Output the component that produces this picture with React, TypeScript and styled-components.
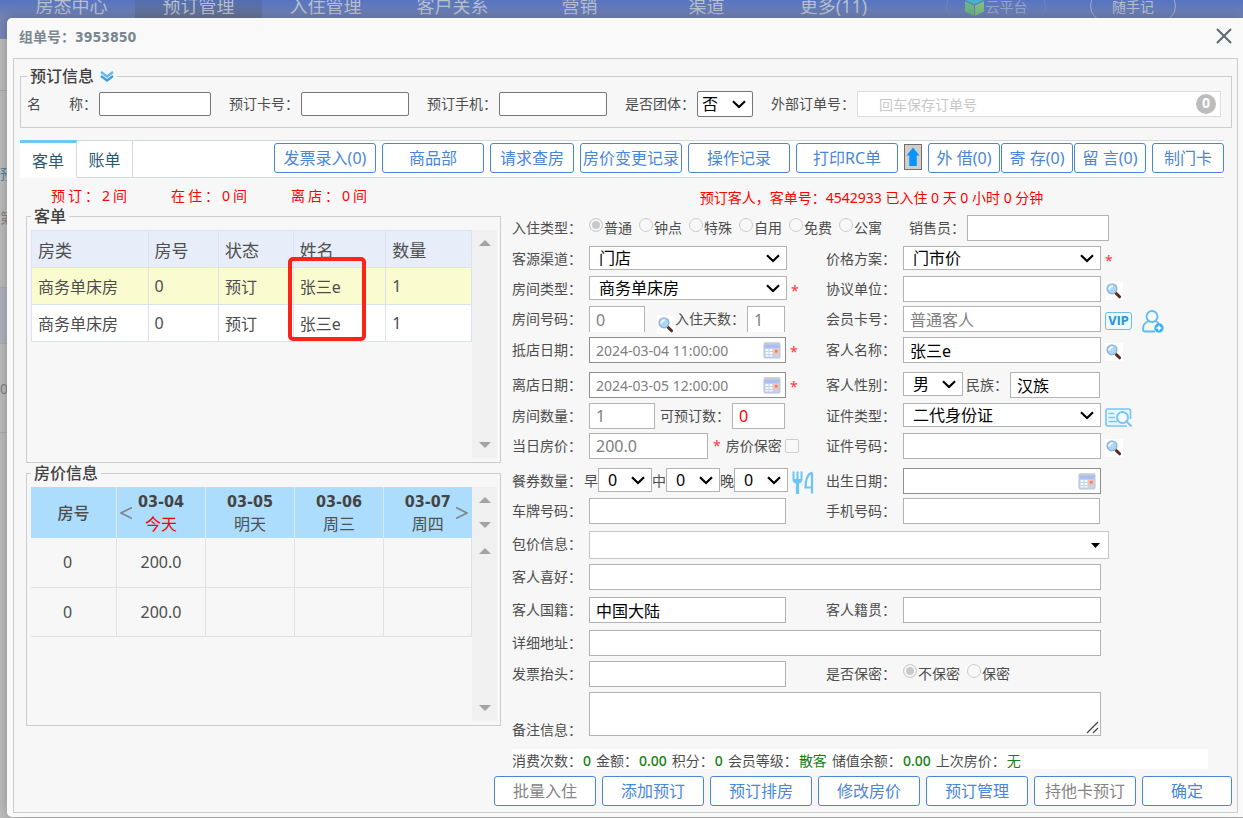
import React from 'react';
import styled, { createGlobalStyle, css } from 'styled-components';

const GlobalStyle = createGlobalStyle`
  * { box-sizing: border-box; }
  body { margin: 0; background: #bdbdbd; }
  body, button, input, select, textarea {
    font-family: "Noto Sans", "Noto Sans CJK SC", sans-serif;
  }
`;

const boldFont = '"DejaVu Sans Condensed", "Noto Sans CJK SC", sans-serif';

/* ---------- page behind the dialog ---------- */

const Page = styled.div`
  position: relative;
  min-height: 100vh;
  overflow: hidden;
  color: #4d4d4d;
  font-size: 14px;
`;

const Backdrop = styled.div`
  position: absolute;
  inset: 0;
  background: #bdbdbd;
`;

const TopBar = styled.div`
  display: flex;
  height: 39px;
  padding-left: 8px;
  background: linear-gradient(#5774c2, #7585b3 18px, #7888b8);
`;

const NavItem = styled.a<{ $active?: boolean }>`
  width: 127px;
  text-align: center;
  font-size: 18px;
  line-height: 12px;
  white-space: nowrap;
  color: #b9bfce;
  text-decoration: none;
  background: ${p => (p.$active ? 'linear-gradient(#526db0, #6b7694 18px)' : 'none')};
`;

const PillGroup = styled.div`
  display: flex;
  gap: 44px;
  margin-left: 49px;
`;

const Pill = styled.a<{ $faint?: boolean }>`
  display: flex;
  align-items: center;
  justify-content: center;
  gap: 2px;
  width: ${p => (p.$faint ? 100 : 86)}px;
  height: 32px;
  margin-top: -10px;
  border: 1px solid ${p => (p.$faint ? '#7286bd' : '#a3aecb')};
  border-radius: 16px;
  font-size: 14px;
  color: ${p => (p.$faint ? '#97a5cb' : '#b9bfce')};
  text-decoration: none;
  white-space: nowrap;
`;

const BackRow = styled.div<{ $h: number; $line?: boolean; $tint?: boolean; $blue?: boolean }>`
  display: flex;
  align-items: center;
  height: ${p => p.$h}px;
  border-bottom: ${p => (p.$line ? '1px solid #a9adb5' : '0')};
  background: ${p => (p.$tint ? '#afb4be' : 'none')};
  color: ${p => (p.$blue ? '#4d86a5' : '#848484')};
`;

/* ---------- dialog ---------- */

const Dialog = styled.div`
  position: relative;
  margin: 18px 0 0 7px;
  padding: 0 5px 4px 6px;
  border-radius: 5px 0 0 5px;
  background: #f9f9f9;
  box-shadow: 0 0 14px rgba(0, 0, 0, 0.25);
`;

const TitleBar = styled.header`
  display: flex;
  justify-content: space-between;
  align-items: center;
  height: 40px;
  padding: 0 6px 4px 6px;
`;

const Title = styled.h1`
  margin: 0;
  font-family: ${boldFont};
  font-size: 14px;
  font-weight: bold;
  color: #7a8791;
`;

const IconButton = styled.button`
  display: inline-flex;
  align-items: center;
  justify-content: center;
  flex: none;
  padding: 0;
  border: 0;
  background: none;
`;

const Frame = styled.main`
  padding: 6px 5px 6px 6px;
  border: 1px solid #ccc;
  background: #f7f7f7;
`;

const Legend = styled.legend`
  display: flex;
  align-items: center;
  gap: 6px;
  padding: 0 3px;
  font-size: 16px;
  line-height: 20px;
  font-weight: 500;
  color: #404040;
`;

const Group = styled.fieldset`
  min-width: 0;
  margin: 0;
  padding: 4px 3px 4px 4px;
  border: 1px solid #ccc;
`;

const OrderGroup = styled(Group)`
  padding: 4px 10px 10px 6px;
  ${Legend} { line-height: 22px; }
`;

const SearchRow = styled.div`
  display: flex;
  align-items: center;
  gap: 18px;
`;

const SearchField = styled.div<{ $grow?: boolean }>`
  display: flex;
  align-items: center;
  flex: ${p => (p.$grow ? '1' : 'none')};
`;

const Label = styled.label`
  flex: none;
  padding-right: 2px;
  line-height: 26px;
  white-space: nowrap;
`;

const SearchInput = styled.input<{ $w: number }>`
  width: ${p => p.$w}px;
  height: 24px;
  padding: 0 6px;
  border: 1px solid #767676;
  border-radius: 2px;
  background: #fff;
  font-size: 14px;
`;

const OuterBox = styled.div`
  display: flex;
  align-items: center;
  flex: 1;
  height: 26px;
  padding: 0 4px 0 21px;
  border: 1px solid #ddd;
  background: #fff;
`;

const OuterInput = styled.input`
  flex: 1;
  min-width: 0;
  padding: 0;
  border: 0;
  outline: 0;
  background: none;
  font-size: 14px;
  &::placeholder { color: #c8c8c8; }
`;

const CountBadge = styled.span`
  width: 20px;
  height: 20px;
  border-radius: 10px;
  background: #bdbdbd;
  color: #fff;
  text-align: center;
  font-size: 14px;
  line-height: 18px;
  font-weight: bold;
`;

/* ---------- toolbar ---------- */

const Toolbar = styled.div`
  display: flex;
  justify-content: space-between;
  height: 38px;
  margin: 12px 8px 0 0;
  border-top: 1px solid #d3dadd;
  border-bottom: 1px solid #d3dadd;
  background: #fff;
`;

const Tabs = styled.div`
  display: flex;
  margin: -1px 0;
`;

const Tab = styled.button<{ $active?: boolean }>`
  width: ${p => (p.$active ? 57 : 56)}px;
  padding: 0;
  border: 0;
  border-right: 1px solid #d3dadd;
  border-top: ${p => (p.$active ? '3px solid #6cc9f4' : '1px solid #d3dadd')};
  border-bottom: 1px solid ${p => (p.$active ? '#fff' : '#d3dadd')};
  background: #fff;
  font-size: 16px;
  color: #255a72;
`;

const Actions = styled.div`
  display: flex;
  gap: 6px;
  padding-top: 2px;
`;

const TightActions = styled.div`
  display: flex;
  gap: 1px;
`;

const ActionButton = styled.button<{ $w?: number; $muted?: boolean }>`
  flex: none;
  width: ${p => p.$w ?? 102}px;
  height: 30px;
  padding: 0;
  border: 1px solid #4a86d8;
  border-radius: 3px;
  background: #fff;
  font-size: 16px;
  line-height: 24px;
  white-space: nowrap;
  color: ${p => (p.$muted ? '#858585' : '#4a86d8')};
`;

const ArrowButton = styled(IconButton)`
  width: 18px;
  height: 26px;
  margin-top: 1px;
  border: 1px solid #6e6e6e;
  background: #d2cfc8;
`;

/* ---------- body columns ---------- */

const Columns = styled.div`
  display: grid;
  grid-template-columns: minmax(0, 475fr) minmax(0, 719fr);
  gap: 11px;
  padding: 0 1px 0 6px;
`;

const Counts = styled.div`
  display: flex;
  height: 28px;
  padding: 8px 0 0 25px;
  line-height: 20px;
  letter-spacing: 3px;
  color: #f00;
`;

const Count = styled.span`
  width: 120px;
`;

const ListArea = styled.div<{ $h: number }>`
  position: relative;
  display: flex;
  align-items: flex-start;
  min-height: ${p => p.$h}px;
`;

const Track = styled.div`
  align-self: stretch;
  display: flex;
  flex-direction: column;
  flex: none;
  width: 25px;
  background: #f0f0f0;
`;

const TrackPart = styled.div<{ $h?: number }>`
  display: flex;
  flex-direction: column;
  justify-content: space-between;
  align-items: center;
  flex: ${p => (p.$h ? 'none' : '1')};
  height: ${p => (p.$h ? `${p.$h}px` : 'auto')};
  padding: 10px 0;
`;

const Triangle = styled.i<{ $down?: boolean }>`
  border: 6px solid transparent;
  border-top: ${p => (p.$down ? '6px solid #a3a3a3' : '0')};
  border-bottom: ${p => (p.$down ? '0' : '6px solid #a3a3a3')};
`;

const GuestTable = styled.table`
  flex: 1;
  table-layout: fixed;
  border-collapse: collapse;
  font-size: 16px;
  th, td {
    height: 37px;
    padding: 0 0 0 6px;
    border: 1px solid #dce3f0;
    text-align: left;
    font-weight: normal;
    white-space: nowrap;
  }
  th { font-size: 17px; background: #e7edf9; }
`;

const GuestRow = styled.tr<{ $selected?: boolean }>`
  background: ${p => (p.$selected ? '#fafcd0' : '#fff')};
`;

const Marker = styled.div`
  position: absolute;
  left: 257px;
  top: 27px;
  width: 78px;
  height: 84px;
  border: 4px solid #fc2317;
  border-radius: 5px;
`;

const PriceTable = styled.table`
  flex: 1;
  table-layout: fixed;
  border-collapse: collapse;
  font-size: 16px;
  th {
    position: relative;
    height: 51px;
    padding: 0;
    border-right: 1px solid #dfe9f0;
    background: #acddfd;
    line-height: 22px;
    font-weight: normal;
  }
  th:last-child { border-right: 0; }
  td {
    height: 49px;
    padding: 0;
    border-right: 1px solid #e2e2e2;
    border-bottom: 1px solid #e2e2e2;
    text-align: center;
  }
  td:first-child { padding-right: 12px; }
`;

const DateText = styled.div`
  font-family: ${boldFont};
  font-weight: bold;
  color: #444;
`;

const DayText = styled.div<{ $today?: boolean }>`
  color: ${p => (p.$today ? '#f00' : '#505050')};
`;

const RoomHead = styled.span`
  font-weight: 500;
`;

const Pager = styled(IconButton)<{ $side: 'left' | 'right' }>`
  position: absolute;
  top: 19px;
  ${p => (p.$side === 'left' ? 'left: 3px;' : 'right: 4px;')}
`;

/* ---------- guest form ---------- */

const Form = styled.form`
  min-width: 0;
`;

const Notice = styled.p`
  height: 37px;
  margin: 0;
  padding-top: 8px;
  line-height: 24px;
  text-align: center;
  color: #f00;
`;

const Row = styled.div<{ $h: number; $end?: boolean }>`
  display: flex;
  align-items: ${p => (p.$end ? 'flex-end' : 'flex-start')};
  height: ${p => p.$h}px;
`;

const Half = styled.div<{ $part: 'left' | 'right' }>`
  display: flex;
  align-items: inherit;
  min-width: 0;
  flex: ${p => (p.$part === 'left' ? '314 1 0' : '405 1 0')};
`;

const FormLabel = styled(Label)<{ $w?: number; $low?: boolean }>`
  width: ${p => p.$w ?? 77}px;
  padding: 0;
  line-height: ${p => (p.$low ? 12 : 26)}px;
`;

const Cell = styled.div`
  display: flex;
  align-items: inherit;
  flex: 1;
  min-width: 0;
`;

const Slot = styled.div<{ $w: number }>`
  display: flex;
  align-items: center;
  flex: none;
  gap: 10px;
  width: ${p => p.$w}px;
  height: 30px;
  padding-left: 4px;
`;

const control = css`
  border: 1px solid #b3b3b3;
  border-radius: 0;
  background: #fff;
  font-size: 16px;
`;

const Text = styled.input<{ $w?: number; $tone?: string; $cut?: boolean }>`
  ${control}
  flex: ${p => (p.$w ? 'none' : '1')};
  width: ${p => (p.$w ? `${p.$w}px` : 'auto')};
  min-width: 0;
  height: 26px;
  padding: 0 6px;
  border-bottom-width: ${p => (p.$cut ? 0 : 1)}px;
  color: ${p => p.$tone ?? '#000'};
`;

const SelectBox = styled.div<{ $w?: number }>`
  position: relative;
  display: flex;
  flex: ${p => (p.$w ? 'none' : '1')};
  width: ${p => (p.$w ? `${p.$w}px` : 'auto')};
  min-width: 0;
  svg {
    position: absolute;
    right: 7px;
    top: 50%;
    margin-top: -4px;
    pointer-events: none;
  }
`;

const SelectInput = styled.select<{ $dark?: boolean }>`
  ${control}
  appearance: none;
  flex: 1;
  min-width: 0;
  height: ${p => (p.$dark ? 26 : 24)}px;
  padding: ${p => (p.$dark ? '0 4px' : '0 9px')};
  border-color: ${p => (p.$dark ? '#767676' : '#b3b3b3')};
  border-radius: ${p => (p.$dark ? 2 : 0)}px;
  color: #000;
`;

const DateBox = styled.div`
  display: flex;
  align-items: center;
  flex: 1;
  min-width: 0;
  height: 26px;
  padding: 0 4px 0 6px;
  border: 1px solid #8f8f8f;
  background: #fff;
`;

const DateInput = styled.input`
  flex: 1;
  min-width: 0;
  padding: 0;
  border: 0;
  outline: 0;
  background: none;
  font-size: 14px;
  color: #808080;
`;

const ComboBox = styled.div`
  display: flex;
  align-items: center;
  flex: 1;
  height: 28px;
  padding: 0 8px 0 6px;
  border: 1px solid #c6c6c6;
  background: #fff;
`;

const AreaBox = styled.div`
  position: relative;
  display: flex;
  flex: 1;
  svg {
    position: absolute;
    right: 2px;
    bottom: 2px;
    pointer-events: none;
  }
`;

const Area = styled.textarea`
  ${control}
  flex: 1;
  height: 44px;
  padding: 2px 6px;
  resize: none;
`;

const Star = styled.span<{ $spaced?: boolean }>`
  padding: ${p => (p.$spaced ? '0 5px' : '0')};
  font-size: 14px;
  line-height: 26px;
  color: #f33;
`;

const LensInline = styled.span`
  display: flex;
  align-items: flex-end;
  flex: none;
  height: 28px;
  margin-left: auto;
`;

const InlineLabel = styled(Label)<{ $push?: boolean }>`
  margin-left: ${p => (p.$push ? 'auto' : '0')};
`;

const Meal = styled.label`
  flex: none;
  width: 14px;
  line-height: 26px;
`;

const RadioGroup = styled.div`
  display: flex;
  flex: 1;
  gap: 7px;
`;

const RadioLabel = styled.label`
  display: flex;
  gap: 1px;
  line-height: 26px;
  white-space: nowrap;
`;

const Radio = styled.input.attrs({ type: 'radio' })`
  appearance: none;
  width: 14px;
  height: 14px;
  margin: 3px 0 0;
  border: 1px solid #cdcdcd;
  border-radius: 50%;
  background: #f8f8f8;
  &:checked {
    background: #c9c9c9;
    box-shadow: inset 0 0 0 2px #f8f8f8;
  }
`;

const Check = styled.input.attrs({ type: 'checkbox' })`
  appearance: none;
  flex: none;
  width: 14px;
  height: 14px;
  margin: 6px 0 0 1px;
  border: 1px solid #cdcdcd;
  border-radius: 2px;
  background: #f8f8f8;
`;

const LensTile = styled(IconButton)`
  width: 18px;
  height: 18px;
  background: #fff;
`;

const VipBadge = styled.button`
  width: 27px;
  height: 18px;
  padding: 0;
  border: 1px solid #6fbdf0;
  border-radius: 3px;
  background: #eef8ff;
  font-family: ${boldFont};
  font-size: 12px;
  font-weight: bold;
  line-height: 14px;
  color: #2d97de;
`;

const Stats = styled.div`
  display: flex;
  gap: 5px;
  height: 20px;
  margin: 13px 23px 0 0;
  background: #fff;
  line-height: 24px;
  white-space: nowrap;
`;

const Stat = styled.span`
  display: flex;
  gap: 1px;
`;

const Value = styled.span<{ $number: boolean }>`
  font-weight: ${p => (p.$number ? 500 : 400)};
  color: #138413;
`;

const Footer = styled.footer`
  display: flex;
  justify-content: flex-end;
  gap: 6px;
  margin-top: 7px;
`;

/* ---------- icons ---------- */

const Lens = ({ name }: { name: string }) => (
  <LensTile type="button" aria-label={name}>
    <svg width="18" height="18" viewBox="0 0 18 18">
      <path d="M11 11.2 L14.6 14.8" stroke="#5b2a18" strokeWidth="3" strokeLinecap="round" />
      <circle cx="7" cy="6.8" r="4.9" fill="#a9d6f8" stroke="#93b4d6" strokeWidth="1.4" />
      <path d="M4.2 7.6 Q4.4 4.4 7.8 4.2" stroke="#f2faff" strokeWidth="1.8" fill="none" />
    </svg>
  </LensTile>
);

const Calendar = ({ name }: { name: string }) => (
  <IconButton type="button" aria-label={name}>
    <svg width="18" height="17" viewBox="0 0 18 17">
      <rect x="1" y="1" width="16" height="15" rx="1" fill="#c3d2ee" stroke="#b9c4da" />
      <rect x="1" y="0.5" width="16" height="2" fill="#cfcac6" />
      <rect x="1.5" y="2.5" width="15" height="3.5" fill="#a8bff3" />
      <path d="M2.5 7h3v2h-3zM6.5 7h3v2h-3zM2.5 10h3v2h-3zM6.5 10h3v2h-3zM2.5 13h3v1.5h-3zM6.5 13h3v1.5h-3z" fill="#f5f8fe" />
      <rect x="10" y="6.5" width="5.5" height="6" fill="#f5bfae" />
      <rect x="12" y="8" width="2.5" height="2.5" fill="#ea7c62" />
    </svg>
  </IconButton>
);

const DoubleChevron = () => (
  <svg width="14" height="12" viewBox="0 0 14 12" fill="none" strokeWidth="2.2">
    <path d="M1 2 L7 6.5 L13 2" stroke="#63b9ef" />
    <path d="M1 6 L7 10.5 L13 6" stroke="#3c9fe6" />
  </svg>
);

const Cutlery = () => (
  <svg width="22" height="24" viewBox="0 0 22 24" fill="none" stroke="#6cc5f7">
    <path d="M1.5 0.5V8Q1.5 11.5 5.5 11.5Q9.5 11.5 9.5 8V0.5M5.5 0.5V11" strokeWidth="2" />
    <path d="M2 8H9V10L5.5 12L2 10Z" fill="#6cc5f7" stroke="none" />
    <path d="M5.5 11V23" strokeWidth="3.2" />
    <path d="M20 1.5V22.5M20 1.5Q13.5 4 13.5 16.5H19" strokeWidth="2.2" />
  </svg>
);

const PersonAdd = () => (
  <svg width="22" height="23" viewBox="0 0 22 23" fill="none">
    <circle cx="10" cy="6.5" r="5.5" stroke="#5bbcf5" strokeWidth="1.8" />
    <path d="M6.5 11Q1 13 1 19.5Q1 21.5 3 21.5H13M13.5 11Q16 12 17 14" stroke="#5bbcf5" strokeWidth="1.8" />
    <circle cx="17" cy="18" r="4.7" fill="#3fb0f3" />
    <path d="M14.5 18H19.5M17 15.5V20.5" stroke="#fff" strokeWidth="1.4" />
  </svg>
);

const CardSearch = () => (
  <svg width="27" height="20" viewBox="0 0 27 20" fill="none" stroke="#79c5f4">
    <path d="M25.5 11V3Q25.5 1 23.5 1H3Q1 1 1 3V16Q1 18 3 18H22" strokeWidth="1.6" fill="#e9f6fe" />
    <path d="M3.5 5.5H9M3.5 9.5H10M3.5 13.5H12" strokeWidth="1.6" />
    <circle cx="17.5" cy="9.5" r="5.5" strokeWidth="2" fill="#f4fbff" />
    <path d="M21.5 13.5L26.5 18.5" strokeWidth="2" />
  </svg>
);

const Cube = () => (
  <svg width="19" height="20" viewBox="0 0 19 20">
    <path d="M9.5 0L19 4L9.5 8.5L0 4Z" fill="#4cb0cc" />
    <path d="M0 5L9 9.5V20L0 15.5Z" fill="#6cb584" />
    <path d="M19 5L10 9.5V20L19 15.5Z" fill="#7cbd80" />
  </svg>
);

/* ---------- data ---------- */

const nav = ['房态中心', '预订管理', '入住管理', '客户关系', '营销', '渠道', '更多(11)'];
const guests = [
  ['商务单床房', '0', '预订', '张三e', '1'],
  ['商务单床房', '0', '预订', '张三e', '1'],
];
const days = [
  ['03-04', '今天'],
  ['03-05', '明天'],
  ['03-06', '周三'],
  ['03-07', '周四'],
];
const stayTypes = ['普通', '钟点', '特殊', '自用', '免费', '公寓'];
const stats = [
  ['消费次数：', '0'],
  ['金额：', '0.00'],
  ['积分：', '0'],
  ['会员等级：', '散客'],
  ['储值余额：', '0.00'],
  ['上次房价：', '无'],
];

const Select = ({ id, value, width, dark }: { id: string; value: string; width?: number; dark?: boolean }) => (
  <SelectBox $w={width}>
    <SelectInput id={id} $dark={dark}><option>{value}</option></SelectInput>
    <svg width="14" height="9" viewBox="0 0 14 9" fill="none" stroke="#000" strokeWidth="2.2">
      <path d="M1 1.2L7 7L13 1.2" />
    </svg>
  </SelectBox>
);

const MealSelect = ({ id, label }: { id: string; label: string }) => (
  <>
    <Meal htmlFor={id}>{label}</Meal>
    <Select id={id} value="0" width={54} />
  </>
);

export default function App() {
  return (
    <Page>
      <GlobalStyle />
      <Backdrop>
        <TopBar>
          {nav.map((n, i) => <NavItem href="#" key={n} $active={i === 1}>{n}</NavItem>)}
          <PillGroup>
            <Pill href="#" $faint><Cube />云平台</Pill>
            <Pill href="#">随手记</Pill>
          </PillGroup>
        </TopBar>
        <BackRow $h={52} $line />
        <BackRow $h={60} />
        <BackRow $h={44} $blue>预</BackRow>
        <BackRow $h={44}>第</BackRow>
        <BackRow $h={49} $line />
        <BackRow $h={56} $tint $line />
        <BackRow $h={89} $line>00</BackRow>
      </Backdrop>

      <Dialog role="dialog" aria-labelledby="dialog-title">
        <TitleBar>
          <Title id="dialog-title">组单号：3953850</Title>
          <IconButton type="button" aria-label="关闭">
            <svg width="16" height="16" viewBox="0 0 16 16" stroke="#5d6770" strokeWidth="2">
              <path d="M1 1L15 15M15 1L1 15" />
            </svg>
          </IconButton>
        </TitleBar>

        <Frame>
          <OrderGroup>
            <Legend>预订信息<DoubleChevron /></Legend>
            <SearchRow>
              <SearchField>
                <Label htmlFor="name">名　　称：</Label>
                <SearchInput id="name" $w={112} />
              </SearchField>
              <SearchField>
                <Label htmlFor="card">预订卡号：</Label>
                <SearchInput id="card" $w={108} />
              </SearchField>
              <SearchField>
                <Label htmlFor="mobile">预订手机：</Label>
                <SearchInput id="mobile" $w={108} />
              </SearchField>
              <SearchField>
                <Label htmlFor="team">是否团体：</Label>
                <Select id="team" value="否" width={56} dark />
              </SearchField>
              <SearchField $grow>
                <Label htmlFor="outer">外部订单号：</Label>
                <OuterBox>
                  <OuterInput id="outer" placeholder="回车保存订单号" />
                  <CountBadge>0</CountBadge>
                </OuterBox>
              </SearchField>
            </SearchRow>
          </OrderGroup>

          <Toolbar>
            <Tabs>
              <Tab type="button" $active>客单</Tab>
              <Tab type="button">账单</Tab>
            </Tabs>
            <Actions>
              <ActionButton type="button">发票录入(0)</ActionButton>
              <ActionButton type="button">商品部</ActionButton>
              <ActionButton type="button" $w={84}>请求查房</ActionButton>
              <ActionButton type="button">房价变更记录</ActionButton>
              <ActionButton type="button">操作记录</ActionButton>
              <ActionButton type="button">打印RC单</ActionButton>
              <ArrowButton type="button" aria-label="上传">
                <svg width="14" height="20" viewBox="0 0 14 20">
                  <path d="M7 0.5L13.5 8.5H10.8V19H3.2V8.5H0.5Z" fill="#0a94ff" />
                </svg>
              </ArrowButton>
              <TightActions>
                <ActionButton type="button" $w={72}>外 借(0)</ActionButton>
                <ActionButton type="button" $w={72}>寄 存(0)</ActionButton>
                <ActionButton type="button" $w={72}>留 言(0)</ActionButton>
              </TightActions>
              <ActionButton type="button" $w={72}>制门卡</ActionButton>
            </Actions>
          </Toolbar>

          <Columns>
            <div>
              <Counts>
                <Count>预订：2间</Count>
                <Count>在住：0间</Count>
                <Count>离店：0间</Count>
              </Counts>
              <Group>
                <Legend>客单</Legend>
                <ListArea $h={228}>
                  <GuestTable>
                    <colgroup>
                      <col style={{ width: '26.5%' }} />
                      <col style={{ width: '16%' }} />
                      <col style={{ width: '17%' }} />
                      <col style={{ width: '21%' }} />
                      <col style={{ width: '19.5%' }} />
                    </colgroup>
                    <thead>
                      <tr><th>房类</th><th>房号</th><th>状态</th><th>姓名</th><th>数量</th></tr>
                    </thead>
                    <tbody>
                      {guests.map((g, i) => (
                        <GuestRow key={i} $selected={i === 0}>
                          {g.map((c, j) => <td key={j}>{c}</td>)}
                        </GuestRow>
                      ))}
                    </tbody>
                  </GuestTable>
                  <Track>
                    <TrackPart><Triangle /><Triangle $down /></TrackPart>
                  </Track>
                  <Marker />
                </ListArea>
              </Group>
              <Group>
                <Legend>房价信息</Legend>
                <ListArea $h={234}>
                  <PriceTable>
                    <colgroup>
                      <col style={{ width: '19.4%' }} />
                      <col span={4} />
                    </colgroup>
                    <thead>
                      <tr>
                        <th><RoomHead>房号</RoomHead></th>
                        {days.map(([date, day], i) => (
                          <th key={date}>
                            {i === 0 && (
                              <Pager type="button" $side="left" aria-label="前一天">
                                <svg width="12" height="14" fill="none" stroke="#80898e" strokeWidth="1.8"><path d="M12 1.5L1 7L12 12.5" /></svg>
                              </Pager>
                            )}
                            <DateText>{date}</DateText>
                            <DayText $today={i === 0}>{day}</DayText>
                            {i === 3 && (
                              <Pager type="button" $side="right" aria-label="后一天">
                                <svg width="12" height="14" fill="none" stroke="#80898e" strokeWidth="1.8"><path d="M0 1.5L11 7L0 12.5" /></svg>
                              </Pager>
                            )}
                          </th>
                        ))}
                      </tr>
                    </thead>
                    <tbody>
                      <tr><td>0</td><td>200.0</td><td /><td /><td /></tr>
                      <tr><td>0</td><td>200.0</td><td /><td /><td /></tr>
                    </tbody>
                  </PriceTable>
                  <Track>
                    <TrackPart $h={51}><Triangle /><Triangle $down /></TrackPart>
                    <TrackPart><Triangle /><Triangle $down /></TrackPart>
                  </Track>
                </ListArea>
              </Group>
            </div>

            <Form>
              <Notice>预订客人，客单号：4542933 已入住 0 天 0 小时 0 分钟</Notice>

              <Row $h={31}>
                <FormLabel as="span">入住类型：</FormLabel>
                <RadioGroup>
                  {stayTypes.map((t, i) => (
                    <RadioLabel key={t}>
                      <Radio name="stay" defaultChecked={i === 0} />{t}
                    </RadioLabel>
                  ))}
                </RadioGroup>
                <Label htmlFor="sales">销售员：</Label>
                <Text id="sales" $w={142} />
                <Slot $w={122} />
              </Row>

              <Row $h={30}>
                <Half $part="left">
                  <FormLabel htmlFor="channel">客源渠道：</FormLabel>
                  <Select id="channel" value="门店" />
                  <Slot $w={39} />
                </Half>
                <Half $part="right">
                  <FormLabel htmlFor="plan">价格方案：</FormLabel>
                  <Select id="plan" value="门市价" />
                  <Slot $w={130}><Star>*</Star></Slot>
                </Half>
              </Row>

              <Row $h={30}>
                <Half $part="left">
                  <FormLabel htmlFor="room-type">房间类型：</FormLabel>
                  <Select id="room-type" value="商务单床房" />
                  <Slot $w={39}><Star>*</Star></Slot>
                </Half>
                <Half $part="right">
                  <FormLabel htmlFor="company">协议单位：</FormLabel>
                  <Text id="company" />
                  <Slot $w={130}><Lens name="查找协议单位" /></Slot>
                </Half>
              </Row>

              <Row $h={31}>
                <Half $part="left">
                  <FormLabel htmlFor="room-no">房间号码：</FormLabel>
                  <Cell>
                    <Text id="room-no" $w={56} $tone="#808080" $cut defaultValue="0" />
                    <LensInline><Lens name="查找房间" /></LensInline>
                    <InlineLabel htmlFor="nights">入住天数：</InlineLabel>
                    <Text id="nights" $w={38} $tone="#808080" $cut defaultValue="1" />
                  </Cell>
                  <Slot $w={41} />
                </Half>
                <Half $part="right">
                  <FormLabel htmlFor="member">会员卡号：</FormLabel>
                  <Text id="member" $tone="#808080" defaultValue="普通客人" />
                  <Slot $w={130}>
                    <VipBadge type="button">VIP</VipBadge>
                    <IconButton type="button" aria-label="新增会员"><PersonAdd /></IconButton>
                  </Slot>
                </Half>
              </Row>

              <Row $h={35}>
                <Half $part="left">
                  <FormLabel htmlFor="arrive">抵店日期：</FormLabel>
                  <DateBox>
                    <DateInput id="arrive" defaultValue="2024-03-04 11:00:00" />
                    <Calendar name="选择抵店日期" />
                  </DateBox>
                  <Slot $w={40}><Star>*</Star></Slot>
                </Half>
                <Half $part="right">
                  <FormLabel htmlFor="guest">客人名称：</FormLabel>
                  <Text id="guest" defaultValue="张三e" />
                  <Slot $w={130}><Lens name="查找客人" /></Slot>
                </Half>
              </Row>

              <Row $h={31}>
                <Half $part="left">
                  <FormLabel htmlFor="leave">离店日期：</FormLabel>
                  <DateBox>
                    <DateInput id="leave" defaultValue="2024-03-05 12:00:00" />
                    <Calendar name="选择离店日期" />
                  </DateBox>
                  <Slot $w={40}><Star>*</Star></Slot>
                </Half>
                <Half $part="right">
                  <FormLabel htmlFor="sex">客人性别：</FormLabel>
                  <Cell>
                    <Select id="sex" value="男" width={60} />
                    <InlineLabel htmlFor="nation" $push>民族：</InlineLabel>
                    <Text id="nation" $w={90} defaultValue="汉族" />
                  </Cell>
                  <Slot $w={131} />
                </Half>
              </Row>

              <Row $h={30}>
                <Half $part="left">
                  <FormLabel htmlFor="rooms">房间数量：</FormLabel>
                  <Cell>
                    <Text id="rooms" $w={66} $tone="#808080" defaultValue="1" />
                    <InlineLabel htmlFor="avail" $push>可预订数：</InlineLabel>
                    <Text id="avail" $w={53} $tone="#f00" defaultValue="0" />
                  </Cell>
                  <Slot $w={41} />
                </Half>
                <Half $part="right">
                  <FormLabel htmlFor="id-type">证件类型：</FormLabel>
                  <Select id="id-type" value="二代身份证" />
                  <Slot $w={130}>
                    <IconButton type="button" aria-label="读取证件"><CardSearch /></IconButton>
                  </Slot>
                </Half>
              </Row>

              <Row $h={35}>
                <Half $part="left">
                  <FormLabel htmlFor="price">当日房价：</FormLabel>
                  <Text id="price" $w={119} $tone="#808080" defaultValue="200.0" />
                  <Star $spaced>*</Star>
                  <Label htmlFor="hide-price">房价保密</Label>
                  <Check id="hide-price" />
                </Half>
                <Half $part="right">
                  <FormLabel htmlFor="id-no">证件号码：</FormLabel>
                  <Text id="id-no" />
                  <Slot $w={130}><Lens name="查找证件" /></Slot>
                </Half>
              </Row>

              <Row $h={30}>
                <Half $part="left">
                  <FormLabel as="span" $w={72}>餐券数量：</FormLabel>
                  <Cell>
                    <MealSelect id="breakfast" label="早" />
                    <MealSelect id="lunch" label="中" />
                    <MealSelect id="dinner" label="晚" />
                    <Slot $w={30}>
                      <IconButton type="button" aria-label="餐券"><Cutlery /></IconButton>
                    </Slot>
                  </Cell>
                </Half>
                <Half $part="right">
                  <FormLabel htmlFor="birth">出生日期：</FormLabel>
                  <DateBox>
                    <DateInput id="birth" />
                    <Calendar name="选择出生日期" />
                  </DateBox>
                  <Slot $w={130} />
                </Half>
              </Row>

              <Row $h={33}>
                <Half $part="left">
                  <FormLabel htmlFor="plate">车牌号码：</FormLabel>
                  <Text id="plate" />
                  <Slot $w={40} />
                </Half>
                <Half $part="right">
                  <FormLabel htmlFor="phone">手机号码：</FormLabel>
                  <Text id="phone" />
                  <Slot $w={131} />
                </Half>
              </Row>

              <Row $h={33}>
                <FormLabel htmlFor="package">包价信息：</FormLabel>
                <ComboBox>
                  <DateInput id="package" />
                  <svg width="9" height="5" viewBox="0 0 9 5"><path d="M0 0H9L4.5 5Z" fill="#000" /></svg>
                </ComboBox>
                <Slot $w={122} />
              </Row>

              <Row $h={33}>
                <FormLabel htmlFor="hobby">客人喜好：</FormLabel>
                <Text id="hobby" />
                <Slot $w={130} />
              </Row>

              <Row $h={33}>
                <Half $part="left">
                  <FormLabel htmlFor="country">客人国籍：</FormLabel>
                  <Text id="country" defaultValue="中国大陆" />
                  <Slot $w={40} />
                </Half>
                <Half $part="right">
                  <FormLabel htmlFor="native">客人籍贯：</FormLabel>
                  <Text id="native" />
                  <Slot $w={130} />
                </Half>
              </Row>

              <Row $h={31}>
                <FormLabel htmlFor="address">详细地址：</FormLabel>
                <Text id="address" />
                <Slot $w={130} />
              </Row>

              <Row $h={31}>
                <Half $part="left">
                  <FormLabel htmlFor="invoice">发票抬头：</FormLabel>
                  <Text id="invoice" />
                  <Slot $w={40} />
                </Half>
                <Half $part="right">
                  <FormLabel as="span">是否保密：</FormLabel>
                  <RadioGroup>
                    <RadioLabel><Radio name="secret" defaultChecked />不保密</RadioLabel>
                    <RadioLabel><Radio name="secret" />保密</RadioLabel>
                  </RadioGroup>
                </Half>
              </Row>

              <Row $h={44} $end>
                <FormLabel htmlFor="note" $low>备注信息：</FormLabel>
                <AreaBox>
                  <Area id="note" />
                  <svg width="13" height="13" viewBox="0 0 13 13" stroke="#444" strokeWidth="1.3">
                    <path d="M1 12L12 1M7 12L12 7" />
                  </svg>
                </AreaBox>
                <Slot $w={130} />
              </Row>

              <Stats>
                {stats.map(([k, v]) => (
                  <Stat key={k}>{k}<Value $number={v.startsWith('0')}>{v}</Value></Stat>
                ))}
              </Stats>
            </Form>
          </Columns>

          <Footer>
            <ActionButton type="button" $muted>批量入住</ActionButton>
            <ActionButton type="button">添加预订</ActionButton>
            <ActionButton type="button">预订排房</ActionButton>
            <ActionButton type="button">修改房价</ActionButton>
            <ActionButton type="button">预订管理</ActionButton>
            <ActionButton type="button" $muted>持他卡预订</ActionButton>
            <ActionButton type="button" $w={90}>确定</ActionButton>
          </Footer>
        </Frame>
      </Dialog>
    </Page>
  );
}
